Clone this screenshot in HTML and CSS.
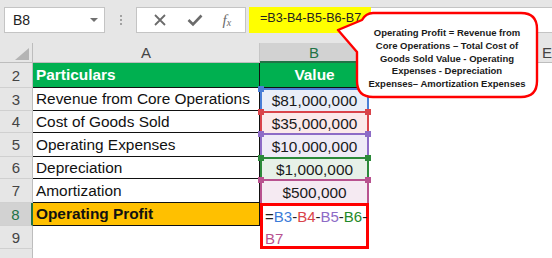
FILE: index.html
```html
<!DOCTYPE html>
<html>
<head>
<meta charset="utf-8">
<link rel="stylesheet" href="styles.css">
</head>
<body>
<div class="app">
  <div class="toolbar">
    <div class="namebox">
      <span class="name">B8</span>
      <span class="dd"></span>
    </div>
    <div class="grip"><i></i><i></i><i></i></div>
    <div class="fxbtns">
      <svg class="ico" width="14" height="14" viewBox="0 0 14 14"><path d="M2 2 L12 12 M12 2 L2 12" stroke="#6b6b6b" stroke-width="1.8" fill="none"/></svg>
      <svg class="ico" width="16" height="14" viewBox="0 0 16 14"><path d="M1.5 7 L6 11.5 L14.5 2.5" stroke="#6b6b6b" stroke-width="2.6" fill="none"/></svg>
      <span class="fx">f<sub>x</sub></span>
    </div>
    <div class="formula"><span class="hl">=B3-B4-B5-B6-B7</span></div>
  </div>

  <div class="sheet">
    <div class="corner"><span class="tri"></span></div>
    <div class="ch">A</div>
    <div class="ch sel">B</div>
    <div class="ch"></div>
    <div class="ch"></div>
    <div class="ch e">E</div>

    <div class="rh">2</div>
    <div class="c a hdr">Particulars</div>
    <div class="c b hdr center">Value</div>
    <div class="c rest"></div>

    <div class="rh">3</div>
    <div class="c a">Revenue from Core Operations</div>
    <div class="c b ref r1"><span class="h tl"></span>$81,000,000</div>
    <div class="c rest"></div>

    <div class="rh">4</div>
    <div class="c a">Cost of Goods Sold</div>
    <div class="c b ref r2"><span class="h tl"></span><span class="h tr"></span>$35,000,000</div>
    <div class="c rest"></div>

    <div class="rh">5</div>
    <div class="c a">Operating Expenses</div>
    <div class="c b ref r3"><span class="h tl"></span><span class="h tr"></span>$10,000,000</div>
    <div class="c rest"></div>

    <div class="rh">6</div>
    <div class="c a">Depreciation</div>
    <div class="c b ref r4"><span class="h tl"></span><span class="h tr"></span>$1,000,000</div>
    <div class="c rest"></div>

    <div class="rh">7</div>
    <div class="c a">Amortization</div>
    <div class="c b ref r5"><span class="h tl"></span><span class="h tr"></span>$500,000</div>
    <div class="c rest"></div>

    <div class="rh selrow">8</div>
    <div class="c a total">Operating Profit</div>
    <div class="c b edit">=<span class="f1">B3</span>-<span class="f2">B4</span>-<span class="f3">B5</span>-<span class="f4">B6</span>-<br><span class="f5">B7</span></div>
    <div class="c rest"></div>

    <div class="rh">9</div>
    <div class="c a plain"></div>
    <div class="c rest"></div>

    <div class="rh">10</div>
    <div class="c a plain"></div>
    <div class="c bb"></div>
    <div class="c rest"></div>
  </div>

  <svg class="bubble" width="552" height="258" viewBox="0 0 552 258">
    <path d="M373 13 H521 Q537 13 537 29 V81 Q537 97 521 97 H373 Q357 97 357 81 V52 L338 30 L362 20 Q366 13 373 13 Z" fill="#ffffff" stroke="#ff0000" stroke-width="2.4" stroke-linejoin="round"/>
  </svg>
  <div class="bubble-text">Operating Profit = Revenue from<br>Core Operations – Total Cost of<br>Goods Sold Value - Operating<br>Expenses - Depreciation<br>Expenses– Amortization Expenses</div>
</div>
</body>
</html>
```

FILE: styles.css
```css
* { box-sizing: border-box; }
html, body { margin: 0; padding: 0; }
body {
  width: 552px;
  height: 258px;
  overflow: hidden;
  background: #ffffff;
  font-family: "Liberation Sans", Arial, sans-serif;
}
.app {
  position: relative;
  width: 552px;
  height: 258px;
  overflow: hidden;
}

/* toolbar */
.toolbar {
  height: 43px;
  background: #e6e6e6;
  display: flex;
  align-items: flex-start;
  padding: 7px 0 0 4px;
}
.namebox {
  width: 101px;
  height: 26px;
  background: #ffffff;
  border: 1px solid #c4c4c4;
  display: flex;
  align-items: center;
  justify-content: space-between;
  padding: 0 6px 0 8px;
}
.name { font-size: 14px; color: #222; }
.dd {
  width: 0; height: 0;
  border-left: 4px solid transparent;
  border-right: 4px solid transparent;
  border-top: 4px solid #707070;
}
.grip {
  width: 31px;
  height: 26px;
  display: flex;
  flex-direction: column;
  align-items: center;
  justify-content: center;
  gap: 2px;
}
.grip i { width: 2px; height: 2px; background: #a2a2a2; display: block; }
.fxbtns {
  width: 110px;
  height: 26px;
  background: #ffffff;
  border: 1px solid #c4c4c4;
  display: flex;
  align-items: center;
  justify-content: space-around;
  padding: 0 4px 0 6px;
}
.fx {
  font-family: "Liberation Serif", serif;
  font-style: italic;
  font-size: 15px;
  color: #6b6b6b;
  line-height: 1;
}
.fx sub { font-size: 10px; vertical-align: -1px; }
.formula {
  flex: 1;
  height: 26px;
  margin-left: 3px;
  background: #ffffff;
  border: 1px solid #c4c4c4;
  border-right: none;
  display: flex;
}
.hl {
  background: #ffff00;
  width: 122px;
  height: 100%;
  margin: -1px 0 0 -1px;
  padding: 4px 0 0 11px;
  font-size: 12.6px;
  color: #222;
  height: 26px;
}

/* sheet */
.sheet {
  display: grid;
  grid-template-columns: 33px 227px 109px 84px 84px 60px;
  grid-template-rows: 20px 25px 23px 22px 24px 22px 24px 23px 23px 30px;
  font-size: 15.4px;
  color: #111;
}
.corner {
  background: #e6e6e6;
  border-right: 1px solid #bdbdbd;
  border-bottom: 1px solid #bdbdbd;
  position: relative;
}
.tri {
  position: absolute;
  left: 15px; top: 5px;
  width: 14px; height: 12px;
  background: #b4b4b4;
  clip-path: polygon(100% 0, 100% 100%, 0 100%);
}
.ch {
  background: #e6e6e6;
  border-right: 1px solid #c6c6c6;
  border-bottom: 1px solid #bdbdbd;
  display: flex;
  align-items: center;
  justify-content: center;
  color: #444;
  font-size: 15px;
}
.ch.sel {
  background: #d2d2d2;
  color: #217346;
  border-bottom: 2px solid #217346;
}
.ch.e { justify-content: flex-start; padding-left: 5px; }
.rh {
  grid-column: 1;
  background: #e6e6e6;
  border-right: 1px solid #bdbdbd;
  border-bottom: 1px solid #d0d0d0;
  display: flex;
  align-items: center;
  justify-content: center;
  color: #444;
  font-size: 15px;
}
.rh.selrow {
  background: #d2d2d2;
  color: #217346;
  border-right: 2px solid #217346;
}
.c {
  display: flex;
  align-items: center;
  white-space: nowrap;
}
.a {
  grid-column: 2;
  padding-left: 3px;
  border-right: 1px solid #111;
  border-bottom: 1px solid #111;
}
.a.plain { border: none; }
.b {
  grid-column: 3;
  justify-content: center;
}
.bb { grid-column: 3; }
.rest { grid-column: 4 / 7; }
.hdr {
  background: #00b050;
  color: #ffffff;
  font-weight: bold;
}
.b.hdr { border-bottom: 1px solid #111; }
.total {
  background: #ffc000;
  font-weight: bold;
}
.ref {
  position: relative;
  border: 2px solid;
  border-bottom: none;
  padding-top: 1px;
  color: #1a1a1a;
}
.r1 { border-color: #4a7ed6; background: #e9eef8; }
.r2 { border-color: #d9434a; background: #fbe9ea; }
.r3 { border-color: #8d6bc6; background: #efebf7; }
.r4 { border-color: #2c8a3a; background: #e7f1e8; }
.r5 { border-color: #b8528f; background: #f5eaf2; }
.h {
  position: absolute;
  width: 6px; height: 6px;
  top: -4px;
}
.h.tl { left: -4px; }
.h.tr { right: -4px; }
.r1 .h { background: #4a7ed6; }
.r2 .h { background: #d9434a; }
.r3 .h { background: #8d6bc6; }
.r4 .h { background: #2c8a3a; }
.r5 .h { background: #b8528f; }
.edit {
  grid-row: span 2;
  display: block;
  border: 3px solid #ff0000;
  background: #ffffff;
  padding: 0 0 0 2px;
  line-height: 22px;
  white-space: nowrap;
  color: #222;
  font-size: 15px;
}
.f1 { color: #3a7bd8; }
.f2 { color: #d9434a; }
.f3 { color: #8d6bc6; }
.f4 { color: #1f8a2a; }
.f5 { color: #b8528f; }

/* callout */
.bubble {
  position: absolute;
  left: 0; top: 0;
  pointer-events: none;
}
.bubble-text {
  position: absolute;
  left: 357px;
  top: 27px;
  width: 180px;
  text-align: center;
  font-size: 9.5px;
  font-weight: bold;
  line-height: 12.8px;
  color: #1a1a1a;
}
```
